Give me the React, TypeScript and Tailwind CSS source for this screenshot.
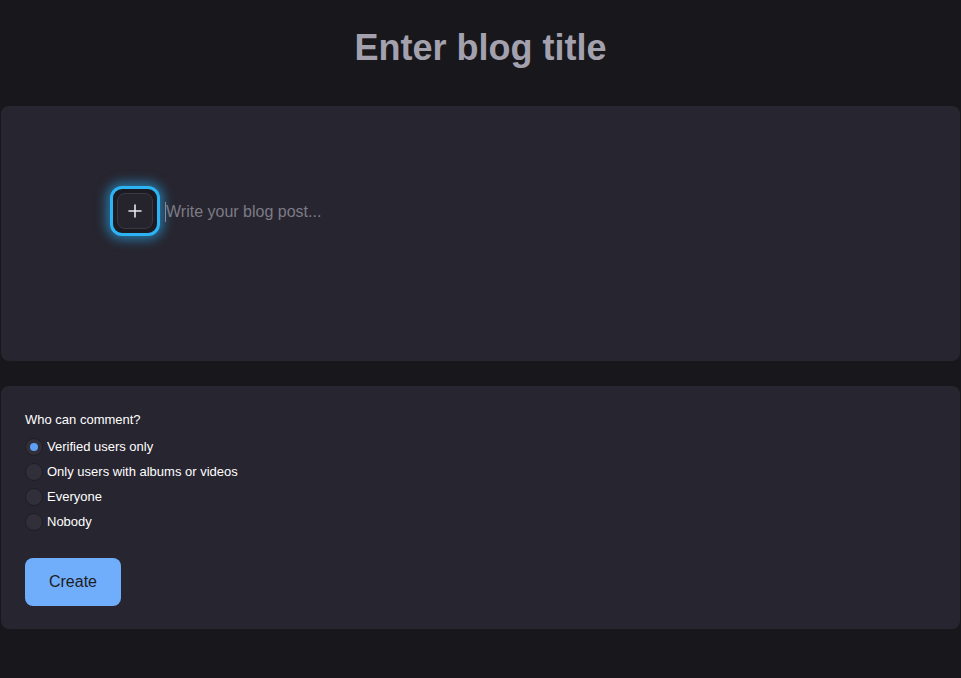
import React from "react";

export default function App() {
  const options = [
    "Verified users only",
    "Only users with albums or videos",
    "Everyone",
    "Nobody",
  ];
  const [sel, setSel] = React.useState(0);
  return (
    <div className="min-h-[678px] bg-[#18171c] px-[1px] pt-[26px]" style={{ fontFamily: '"Liberation Sans", Arial, sans-serif' }}>
      <h1 className="text-center text-[36px] font-bold leading-[44px] text-[#a3a1ad]">Enter blog title</h1>
      <div className="mt-[36px] h-[255px] rounded-lg bg-[#27252f] pl-[109px] pt-[80px]">
        <div className="flex items-center">
          <div className="flex h-[50px] w-[50px] items-center justify-center rounded-[12px] border-[3px] border-[#2cb4f5] bg-[#1c1b21] shadow-[0_0_12px_3px_rgba(40,170,240,0.65)]">
            <div className="flex h-[36px] w-[36px] items-center justify-center rounded-[8px] border border-[#3a3843] bg-[#25232c]">
              <svg width="14" height="14" viewBox="0 0 14 14">
                <path d="M7 1v12M1 7h12" stroke="#e6e6ea" strokeWidth="1.6" strokeLinecap="round" />
              </svg>
            </div>
          </div>
          <div className="ml-[5px] mt-[2px] flex items-center">
            <span className="h-[20px] w-[1px] bg-[#8a8894]" />
            <span className="text-[16px] text-[#7d7b86]">Write your blog post...</span>
          </div>
        </div>
      </div>
      <div className="mt-[25px] h-[243px] rounded-lg bg-[#27252f] px-[24px] pt-[26px]">
        <div className="text-[13px] leading-[15px] text-white">Who can comment?</div>
        <div className="mt-[11px] flex flex-col gap-[7px]">
          {options.map((o, i) => (
            <label key={o} className="flex h-[18px] cursor-pointer items-center gap-[4px]" onClick={() => setSel(i)}>
              <span className="flex h-[18px] w-[18px] items-center justify-center rounded-full border border-[#1f1e24] bg-[#312f39]">
                {sel === i && <span className="h-[8px] w-[8px] rounded-full bg-[#5ea0f3]" />}
              </span>
              <span className="text-[13px] text-white">{o}</span>
            </label>
          ))}
        </div>
        <button className="mt-[27px] h-[48px] w-[96px] rounded-lg bg-[#70aefc] text-[16px] text-[#1d1c22]">Create</button>
      </div>
    </div>
  );
}
